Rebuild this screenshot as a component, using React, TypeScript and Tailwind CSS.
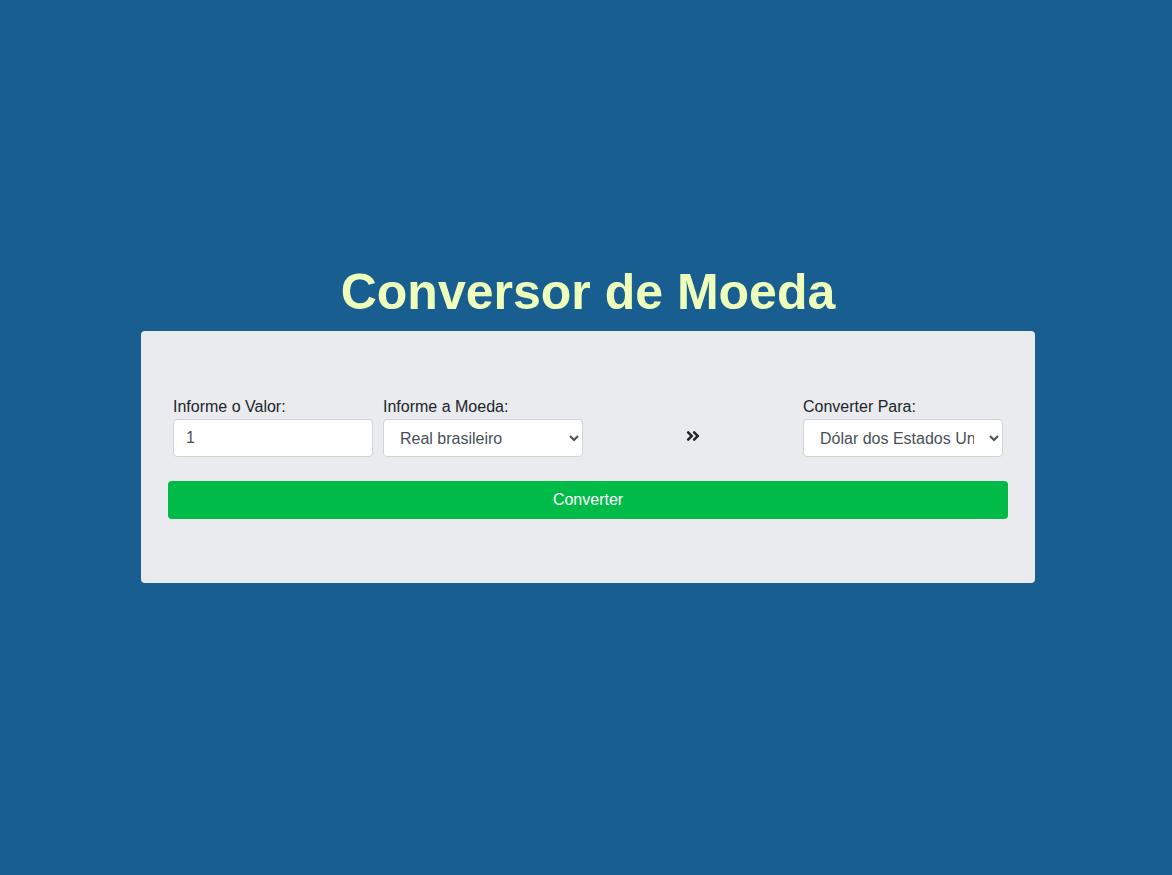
import React, { useState } from 'react'
import { FaAngleDoubleRight } from 'react-icons/fa'

const moedas = ['Real brasileiro', 'Dólar dos Estados Unidos', 'Euro', 'Libra esterlina']

export default function App() {
  const [valor, setValor] = useState('1')
  const [de, setDe] = useState('Real brasileiro')
  const [para, setPara] = useState('Dólar dos Estados Unidos')

  return (
    <div className="min-h-screen bg-[#185e90] pl-[4px] flex flex-col items-center justify-center font-['Liberation_Sans',Arial,sans-serif] text-[#212529]">
      <h1 className="text-[50px] leading-[1.2] font-bold text-[#eeffbb] mb-[9px]">Conversor de Moeda</h1>
      <div className="w-[894px] bg-[#e9ebef] rounded-[4px] px-[27px] py-[64px] mb-[30px]">
        <div className="grid grid-cols-[200px_200px_200px_200px] gap-[10px] justify-center items-end">
          <label className="flex flex-col">
            <span className="text-base leading-6">Informe o Valor:</span>
            <input
              value={valor}
              onChange={e => setValor(e.target.value)}
              className="h-[38px] px-3 bg-white border border-[#ced4da] rounded-[4px] text-base text-[#495057] outline-none"
            />
          </label>
          <label className="flex flex-col">
            <span className="text-base leading-6">Informe a Moeda:</span>
            <select
              value={de}
              onChange={e => setDe(e.target.value)}
              className="h-[38px] px-3 bg-white border border-[#ced4da] rounded-[4px] text-base text-[#495057] outline-none"
            >
              {moedas.map(m => <option key={m}>{m}</option>)}
            </select>
          </label>
          <div className="h-[38px] pb-[4px] flex items-center justify-center">
            <FaAngleDoubleRight className="text-[#212529] w-[14px] h-[16px]" />
          </div>
          <label className="flex flex-col">
            <span className="text-base leading-6">Converter Para:</span>
            <select
              value={para}
              onChange={e => setPara(e.target.value)}
              className="h-[38px] px-3 bg-white border border-[#ced4da] rounded-[4px] text-base text-[#495057] outline-none"
            >
              {moedas.map(m => <option key={m}>{m}</option>)}
            </select>
          </label>
        </div>
        <button className="mt-6 w-full h-[38px] bg-[#00bb48] rounded-[4px] text-white text-base">Converter</button>
      </div>
    </div>
  )
}
